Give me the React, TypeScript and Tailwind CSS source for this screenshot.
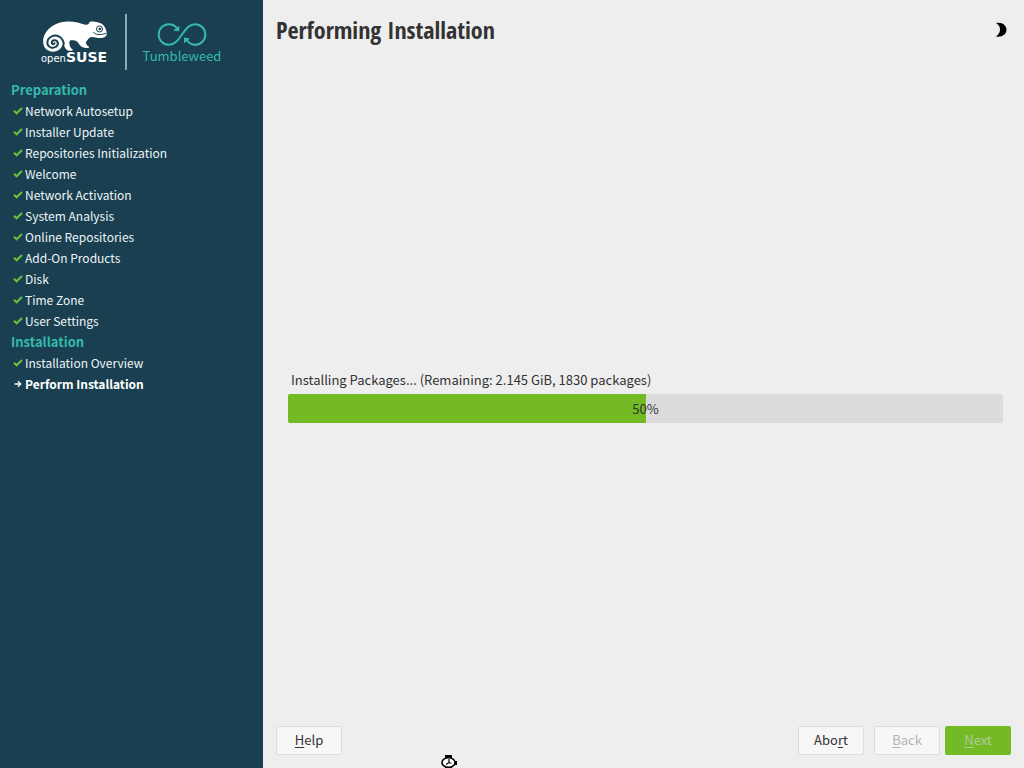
import React from "react";

type Step = { name: string; current?: boolean };

const sections: { title: string; steps: Step[] }[] = [
  {
    title: "Preparation",
    steps: [
      { name: "Network Autosetup" },
      { name: "Installer Update" },
      { name: "Repositories Initialization" },
      { name: "Welcome" },
      { name: "Network Activation" },
      { name: "System Analysis" },
      { name: "Online Repositories" },
      { name: "Add-On Products" },
      { name: "Disk" },
      { name: "Time Zone" },
      { name: "User Settings" },
    ],
  },
  {
    title: "Installation",
    steps: [{ name: "Installation Overview" }, { name: "Perform Installation", current: true }],
  },
];

function Chameleon() {
  return (
    <svg viewBox="0 0 200 96" className="h-8 w-[67px]" aria-hidden="true">
      <path
        fill="#fff"
        d="M33 95C14 95 3 82 3 64C3 36 30 9 68 5C92 2 112 9 130 14C137 15 141 12 142 6C150 3 168 5 181 13C188 18 192 30 194 39C195 48 188 53 178 54C166 55 154 50 147 51C139 53 137 60 131 67C132 75 137 79 141 80C141 84 138 85 129 84C119 82 112 76 108 68C103 61 94 60 84 61C80 66 81 73 85 82C87 86 90 87 92 89L90 92C80 94 74 91 69 84C66 78 66 73 62 70C61 84 48 95 33 95Z"
      />
      <path
        fill="none"
        stroke="#193f50"
        strokeWidth="6"
        strokeLinecap="round"
        d="M65 72C62 50 43 43 29 49C13 56 11 76 25 82C38 87 51 76 46 66C42 58 29 60 29 68C29 73 35 74 37 70"
      />
      <circle cx="172" cy="27" r="9" fill="none" stroke="#193f50" strokeWidth="3" />
      <circle cx="173" cy="27" r="4" fill="#193f50" />
      <path d="M153 36C163 47 177 44 193 40" fill="none" stroke="#193f50" strokeWidth="3" />
    </svg>
  );
}

function Logo() {
  return (
    <div className="flex h-[79px] pt-3.5 pl-10">
      <div className="flex w-[85px] flex-col pt-1.5 pl-0.5">
        <Chameleon />
        <div className="-mt-1 -ml-px flex items-baseline whitespace-nowrap font-['DejaVu_Sans',sans-serif] leading-[18px] text-white">
          <span className="text-[10px]">open</span>
          <span className="text-[14px] font-bold">SUSE</span>
        </div>
      </div>
      <div className="h-14 w-0.5 bg-[#8fa9b2]" />
      <div className="flex w-[110px] flex-col items-center pt-2 text-[#35b9ab]">
        <svg viewBox="0 0 150 74" className="h-[25px] w-[50px]" fill="none" aria-hidden="true">
          <path
            stroke="currentColor"
            strokeWidth="6"
            d="M60 18C52 8 44 6 36 6C18 6 5 20 5 37C5 54 18 68 36 68C53 68 63 54 75 37C87 20 97 6 114 6C132 6 145 20 145 37C145 54 132 68 114 68C103 68 95 62 88 52"
          />
          <path fill="currentColor" d="M67 11V27L48 25ZM81 63V46L99 49Z" />
        </svg>
        <span className="text-[13px] leading-[18px]">Tumbleweed</span>
      </div>
    </div>
  );
}

function StepIcon({ current }: { current?: boolean }) {
  return (
    <svg viewBox="0 0 10 10" className="h-2.5 w-2.5 shrink-0" fill="none" aria-hidden="true">
      {current ? (
        <path d="M1.5 5H7.5M5 2.3L7.7 5L5 7.7" stroke="#fff" strokeWidth="1.3" />
      ) : (
        <path d="M1 4.8L3.6 7.3L9 1.9" stroke="#6cbf37" strokeWidth="2.1" />
      )}
    </svg>
  );
}

function Sidebar() {
  return (
    <aside className="w-[263px] shrink-0 bg-[#193f50]">
      <Logo />
      <nav aria-label="Installation steps">
        {sections.map((section) => (
          <section key={section.title}>
            <h2 className="pl-[11px] text-[13px] leading-[21px] font-bold text-[#35b9ab]">{section.title}</h2>
            <ol>
              {section.steps.map((step) => (
                <li
                  key={step.name}
                  aria-current={step.current ? "step" : undefined}
                  className={
                    step.current
                      ? "flex items-center gap-0.5 pl-[13px] text-[12px] leading-[21px] font-bold text-white"
                      : "flex items-center gap-0.5 pl-[13px] text-[12px] leading-[21px] text-[#eef4f6]"
                  }
                >
                  <StepIcon current={step.current} />
                  {step.name}
                </li>
              ))}
            </ol>
          </section>
        ))}
      </nav>
    </aside>
  );
}

function Accel({ label, at }: { label: string; at: number }) {
  return (
    <span>
      {label.slice(0, at)}
      <span className="underline underline-offset-2">{label[at]}</span>
      {label.slice(at + 1)}
    </span>
  );
}

export default function App() {
  const percent = 50;
  return (
    <div className="flex min-h-screen bg-[#eeeeee] font-['Noto_Sans_CJK_SC',sans-serif] text-[13px] text-[#333333]">
      <Sidebar />
      <main className="relative flex flex-1 flex-col px-[13px] pb-[13px]">
        <header className="flex h-[60px] items-center justify-between">
          <h1 className="font-['Open_Sans_Condensed','Noto_Sans_Condensed','Roboto_Condensed','Liberation_Sans_Narrow',sans-serif] text-2xl font-bold">
            Performing Installation
          </h1>
          <button type="button" aria-label="Toggle dark theme" className="flex h-6 w-5 items-center justify-center">
            <svg viewBox="0 0 12 16" className="h-4 w-3" aria-hidden="true">
              <path d="M1 1C8 0 11.5 4 11.5 8C11.5 12 7 15.5 1 14.5C4 12 5 10 5 7.5C5 5 4 3 1 1Z" fill="#000" />
            </svg>
          </button>
        </header>

        <div className="flex flex-1 flex-col justify-center pt-1.5 pr-2 pl-3">
          <div id="progress-label" className="mb-1 pl-[3px] leading-5">
            Installing Packages... (Remaining: 2.145 GiB, 1830 packages)
          </div>
          <div
            role="progressbar"
            aria-valuenow={percent}
            aria-valuemin={0}
            aria-valuemax={100}
            aria-labelledby="progress-label"
            className="relative h-[29px] overflow-hidden rounded-xs bg-[#dcdcdc]"
          >
            <div className="h-full bg-[#73ba25]" style={{ width: `${percent}%` }} />
            <span className="absolute inset-0 text-center leading-[29px]">{percent}%</span>
          </div>
        </div>

        <footer className="flex items-center">
          <button type="button" className="h-[29px] w-[66px] rounded-xs border border-[#dddddd] bg-[#f7f7f7] pb-0.5">
            <Accel label="Help" at={0} />
          </button>
          <button
            type="button"
            className="ml-auto h-[29px] w-[66px] rounded-xs border border-[#dddddd] bg-[#f7f7f7] pb-0.5"
          >
            <Accel label="Abort" at={3} />
          </button>
          <button
            type="button"
            disabled
            className="ml-2.5 h-[29px] w-[66px] rounded-xs border border-[#dddddd] bg-[#f7f7f7] pb-0.5 text-[#b4b4b4]"
          >
            <Accel label="Back" at={0} />
          </button>
          <button
            type="button"
            disabled
            className="ml-[5px] h-[29px] w-[66px] rounded-xs bg-[#73ba25] pb-0.5 text-[#b4c9a0]"
          >
            <Accel label="Next" at={0} />
          </button>
        </footer>

        <svg viewBox="0 0 16 14" className="absolute bottom-0 left-[178px] h-3.5 w-4" aria-hidden="true">
          <path d="M4 1H11V4H4ZM4 12H11V14H4Z" fill="#000" />
          <ellipse cx="7.5" cy="8.5" rx="6.5" ry="4.8" fill="#fff" stroke="#000" strokeWidth="1.6" />
          <path d="M14 7H16V11H14Z" fill="#000" />
          <path d="M8 5V8.5L5 10.5M8 9H10.5" fill="none" stroke="#000" strokeWidth="1.2" />
        </svg>
      </main>
    </div>
  );
}
